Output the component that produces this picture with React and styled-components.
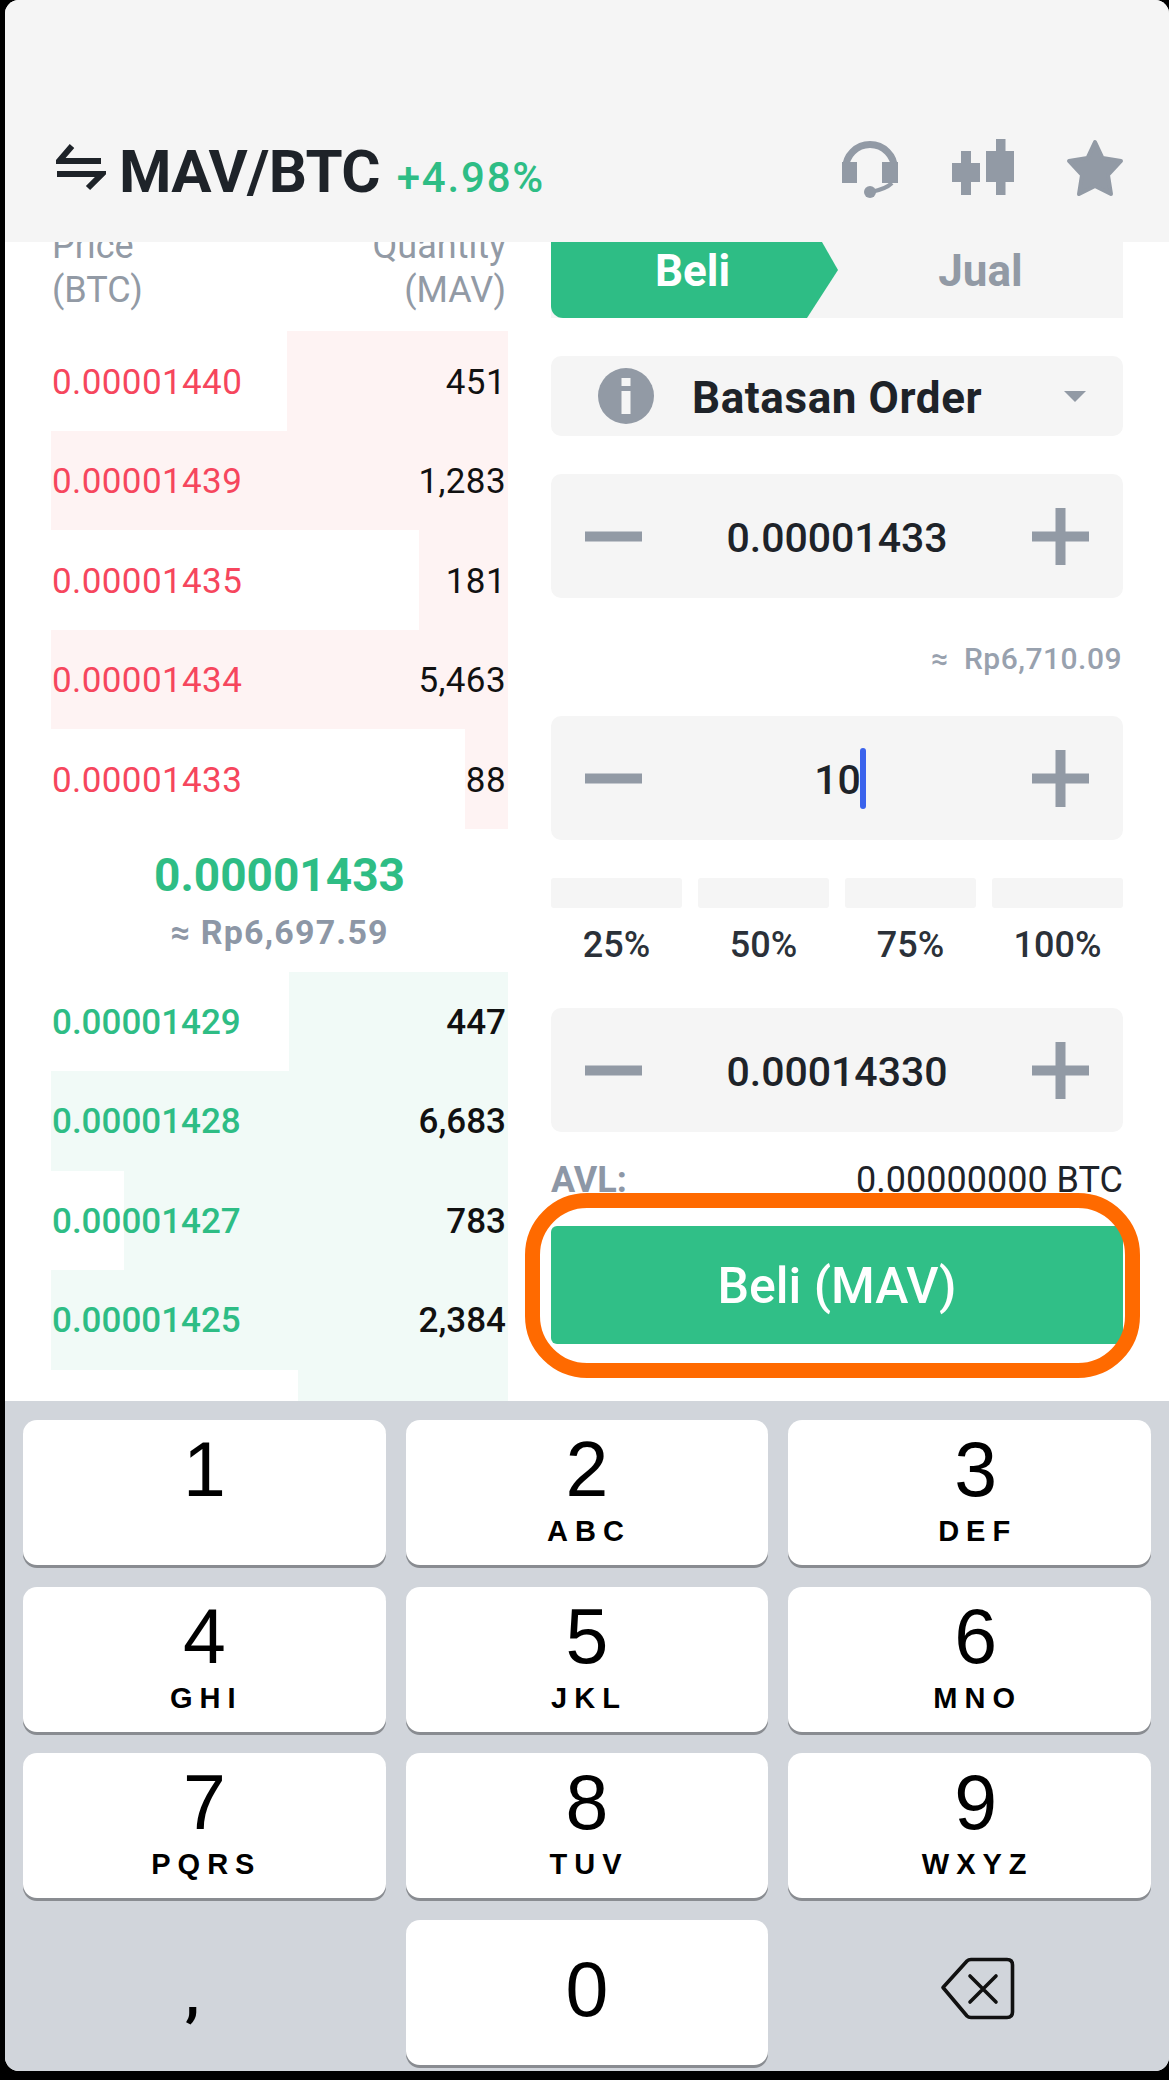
import React from 'react';
import styled, { createGlobalStyle } from 'styled-components';

const GREEN = '#2ebd85';
const RED = '#f6465d';
const GREY = '#929aa5';
const INK = '#1e2329';
const PANEL = '#f5f5f5';

const GlobalStyle = createGlobalStyle`
	html, body {
		margin: 0;
		padding: 0;
		background: #000;
	}
	* {
		box-sizing: border-box;
	}
`;

const Frame = styled.div`
	width: 1169px;
	height: 2080px;
	padding: 0 0 9px 5px;
	background: #000;
	font-family: Roboto, 'Liberation Sans', sans-serif;
`;

const Screen = styled.div`
	display: flex;
	flex-direction: column;
	height: 100%;
	background: #fff;
	border-radius: 14px;
	overflow: hidden;
`;

const Header = styled.header`
	position: relative;
	z-index: 2;
	display: flex;
	align-items: flex-start;
	justify-content: space-between;
	flex: 0 0 242px;
	padding: 142px 45px 0 51px;
	background: ${PANEL};
`;

const TitleWrap = styled.div`
	display: flex;
	align-items: baseline;
`;

const SwapIcon = styled.svg`
	align-self: flex-start;
	width: 50px;
	height: 50px;
	margin: 1px 13px 0 0;
`;

const Pair = styled.span`
	font-size: 60px;
	line-height: 60px;
	font-weight: 700;
	letter-spacing: -0.7px;
	color: ${INK};
`;

const Change = styled.span`
	margin-left: 17px;
	font-size: 42px;
	font-weight: 500;
	letter-spacing: 1.8px;
	color: ${GREEN};
`;

const Actions = styled.div`
	display: flex;
	align-items: flex-start;
	margin-top: -3px;
`;

const HeadsetIcon = styled.svg`
	width: 58px;
	height: 60px;
`;

const CandleIcon = styled.svg`
	width: 62px;
	height: 57px;
	margin-left: 53px;
`;

const StarIcon = styled.svg`
	width: 58px;
	height: 58px;
	margin-left: 52px;
`;

const Body = styled.main`
	display: grid;
	grid-template-columns: 457px 572px;
	column-gap: 43px;
	flex: 1;
	min-height: 0;
	padding-left: 46px;
	overflow: hidden;
`;

const Book = styled.section`
	min-width: 0;
`;

const BookHead = styled.div`
	display: flex;
	justify-content: space-between;
	margin: -18px 2px 19px 1px;
	font-size: 36px;
	line-height: 44px;
	color: ${GREY};
`;

const RightText = styled.div`
	text-align: right;
`;

const Row = styled.div`
	display: flex;
	align-items: center;
	justify-content: space-between;
	height: 99.5px;
	padding: ${p => (p.$buy ? '2px' : '3px')} 2px 0 1px;
	font-size: 35px;
	font-weight: ${p => (p.$buy ? 500 : 400)};
	letter-spacing: ${p => (p.$buy ? '0' : '0.4px')};
	background: linear-gradient(
		to left,
		${p => (p.$buy ? '#f1faf7' : '#fef3f3')} ${p => p.$depth}%,
		transparent ${p => p.$depth}%
	);
`;

const Price = styled.span`
	color: ${p => (p.$buy ? GREEN : RED)};
`;

const Qty = styled.span`
	color: #111;
`;

const Mid = styled.div`
	display: flex;
	flex-direction: column;
	align-items: center;
	height: 143px;
	padding-top: 18px;
`;

const MidPrice = styled.div`
	font-size: 46px;
	line-height: 56px;
	font-weight: 700;
	color: ${GREEN};
`;

const MidFiat = styled.div`
	margin-top: 9px;
	font-size: 34px;
	line-height: 40px;
	font-weight: 700;
	letter-spacing: 1.2px;
	color: #8d97a6;
`;

const Trade = styled.section`
	display: flex;
	flex-direction: column;
	min-width: 0;
`;

const Tabs = styled.div`
	display: flex;
	flex: 0 0 76px;
	background: ${PANEL};
`;

const BuyTab = styled.div`
	flex: 0 0 287px;
	padding: 4px 4px 0 0;
	font-size: 44px;
	line-height: 50px;
	font-weight: 700;
	text-align: center;
	color: #fff;
	background: ${GREEN};
	border-bottom-left-radius: 12px;
	clip-path: polygon(0 0, 271px 0, 287px 28px, 256px 76px, 0 76px);
`;

const SellTab = styled.div`
	flex: 1;
	padding-top: 4px;
	font-size: 44px;
	line-height: 50px;
	font-weight: 700;
	text-align: center;
	color: ${GREY};
`;

const Select = styled.div`
	display: flex;
	align-items: center;
	height: 80px;
	margin-top: 38px;
	padding: 0 37px 0 47px;
	background: ${PANEL};
	border-radius: 10px;
`;

const InfoIcon = styled.svg`
	flex: none;
	width: 56px;
	height: 56px;
`;

const SelectLabel = styled.span`
	flex: 1;
	margin-left: 38px;
	padding-top: 3px;
	font-size: 44px;
	font-weight: 700;
	letter-spacing: 0.6px;
	color: ${INK};
`;

const Caret = styled.svg`
	flex: none;
	width: 22px;
	height: 11px;
`;

const Stepper = styled.div`
	display: flex;
	align-items: center;
	justify-content: space-between;
	height: 124px;
	margin-top: ${p => p.$top || 0}px;
	padding: 0 34px;
	background: ${PANEL};
	border-radius: 10px;
`;

const StepIcon = styled.svg`
	flex: none;
	width: 57px;
	height: 57px;
`;

const StepValue = styled.div`
	display: inline-flex;
	align-items: center;
	padding-top: 4px;
	font-size: 41px;
	font-weight: 500;
	color: ${INK};
`;

const TextCaret = styled.span`
	width: 6px;
	height: 61px;
	margin: -4px -6px 0 -1px;
	background: #3b63ec;
	border-radius: 3px;
`;

const FiatHint = styled.div`
	display: flex;
	align-items: center;
	justify-content: flex-end;
	gap: 15px;
	height: 118px;
	padding: 2px 1px 0 0;
	font-size: 30px;
	font-weight: 500;
	letter-spacing: 0.5px;
	color: #98a1ae;
`;

const Percents = styled.div`
	display: grid;
	grid-template-columns: repeat(4, 1fr);
	column-gap: 16px;
	margin-top: 38px;
`;

const Percent = styled.div`
	text-align: center;
	font-size: 36px;
	line-height: 44px;
	font-weight: 500;
	color: #2b3139;
`;

const PercentBar = styled.div`
	height: 30px;
	margin-bottom: 15px;
	background: ${PANEL};
	border-radius: 3px;
`;

const Balance = styled.div`
	display: flex;
	align-items: center;
	justify-content: space-between;
	height: 94px;
	padding-top: 2px;
	font-size: 36px;
	color: ${INK};
`;

const BalanceLabel = styled.span`
	font-weight: 700;
	color: #8d97a6;
`;

const BuyWrap = styled.div`
	position: relative;
`;

const BuyButton = styled.div`
	display: flex;
	align-items: center;
	justify-content: center;
	height: 118px;
	padding-top: 2px;
	font-size: 50px;
	font-weight: 500;
	color: #fff;
	background: #30bf87;
	border-radius: 6px;
`;

const Ring = styled.div`
	position: absolute;
	top: -33px;
	right: -17px;
	bottom: -34px;
	left: -26px;
	border: 15px solid #ff6a00;
	border-radius: 62px;
	pointer-events: none;
`;

const Keyboard = styled.div`
	display: grid;
	grid-template-columns: repeat(3, 1fr);
	grid-auto-rows: 145px;
	gap: 21.5px 20px;
	flex: 0 0 670px;
	padding: 19px 18px 0;
	background: #d1d5db;
`;

const Key = styled.div`
	padding-top: ${p => (p.$center ? 31 : 11)}px;
	text-align: center;
	background: #fff;
	border-radius: 14px;
	box-shadow: 0 3px 0 #898c91;
	color: #000;
	font-family: 'Liberation Sans', Arial, sans-serif;

	&:nth-child(3n) {
		padding-left: 12px;
	}
`;

const Digit = styled.div`
	font-size: 77px;
	line-height: 76px;
`;

const Letters = styled.div`
	margin-top: 9px;
	font-size: 29px;
	line-height: 30px;
	font-weight: 700;
	letter-spacing: 7px;
	padding-left: 4px;
`;

const BlankKey = styled.div`
	display: flex;
	align-items: flex-start;
	justify-content: center;
	color: #000;
`;

const Comma = styled.span`
	margin: 44px 24px 0 0;
	font-family: Roboto, sans-serif;
	font-size: 60px;
	line-height: 60px;
	font-weight: 700;
`;

const BackspaceIcon = styled.svg`
	width: 75px;
	height: 65px;
	margin-top: 36px;
	margin-left: 15px;
`;

const asks = [
	{ price: '0.00001440', qty: '451', depth: 48.4 },
	{ price: '0.00001439', qty: '1,283', depth: 100 },
	{ price: '0.00001435', qty: '181', depth: 19.5 },
	{ price: '0.00001434', qty: '5,463', depth: 100 },
	{ price: '0.00001433', qty: '88', depth: 9.5 }
];

const bids = [
	{ price: '0.00001429', qty: '447', depth: 48 },
	{ price: '0.00001428', qty: '6,683', depth: 100 },
	{ price: '0.00001427', qty: '783', depth: 84 },
	{ price: '0.00001425', qty: '2,384', depth: 100 },
	{ price: '', qty: '', depth: 46 }
];

const keys = [
	['1', ''],
	['2', 'ABC'],
	['3', 'DEF'],
	['4', 'GHI'],
	['5', 'JKL'],
	['6', 'MNO'],
	['7', 'PQRS'],
	['8', 'TUV'],
	['9', 'WXYZ']
];

const Minus = () => (
	<StepIcon viewBox="0 0 57 57">
		<rect x="0" y="23.5" width="57" height="10" fill={GREY} />
	</StepIcon>
);

const Plus = () => (
	<StepIcon viewBox="0 0 57 57">
		<rect x="0" y="23.5" width="57" height="10" fill={GREY} />
		<rect x="23.5" y="0" width="10" height="57" fill={GREY} />
	</StepIcon>
);

const App = () => (
	<Frame>
		<GlobalStyle />
		<Screen>
			<Header>
				<TitleWrap>
					<SwapIcon viewBox="0 0 50 50">
						<path
							d="M16 3 L3 18 H45 M1 31 H46 L32 45"
							fill="none"
							stroke={INK}
							strokeWidth="6"
							strokeLinejoin="miter"
						/>
					</SwapIcon>
					<Pair>MAV/BTC</Pair>
					<Change>+4.98%</Change>
				</TitleWrap>
				<Actions>
					<HeadsetIcon viewBox="0 0 58 60">
						<path d="M4.5 30 a24.5 24.5 0 0 1 49 0" fill="none" stroke={GREY} strokeWidth="7" />
						<rect x="1" y="23" width="15" height="21" fill={GREY} />
						<rect x="41" y="23" width="16" height="21" fill={GREY} />
						<path d="M51 44 Q45 50 30 53" fill="none" stroke={GREY} strokeWidth="4" />
						<circle cx="29" cy="53" r="6" fill={GREY} />
					</HeadsetIcon>
					<CandleIcon viewBox="0 0 62 57">
						<rect x="9" y="12" width="10" height="44" fill={GREY} />
						<rect x="0" y="24" width="28" height="19" fill={GREY} />
						<rect x="44" y="0" width="9.5" height="56" fill={GREY} />
						<rect x="34" y="12" width="28" height="31" fill={GREY} />
					</CandleIcon>
					<StarIcon viewBox="0 0 58 58">
						<path
							d="M29 3 L36.5 19 L55 22 L42 36 L45 55 L29 47 L13 55 L16 36 L3 22 L21.5 19 Z"
							fill={GREY}
							stroke={GREY}
							strokeWidth="4"
							strokeLinejoin="round"
						/>
					</StarIcon>
				</Actions>
			</Header>

			<Body>
				<Book>
					<BookHead>
						<div>
							Price
							<br />
							(BTC)
						</div>
						<RightText>
							Quantity
							<br />
							(MAV)
						</RightText>
					</BookHead>
					{asks.map(row => (
						<Row key={row.price} $depth={row.depth}>
							<Price>{row.price}</Price>
							<Qty>{row.qty}</Qty>
						</Row>
					))}
					<Mid>
						<MidPrice>0.00001433</MidPrice>
						<MidFiat>≈ Rp6,697.59</MidFiat>
					</Mid>
					{bids.map((row, i) => (
						<Row key={i} $buy $depth={row.depth}>
							<Price $buy>{row.price}</Price>
							<Qty>{row.qty}</Qty>
						</Row>
					))}
				</Book>

				<Trade>
					<Tabs>
						<BuyTab>Beli</BuyTab>
						<SellTab>Jual</SellTab>
					</Tabs>
					<Select>
						<InfoIcon viewBox="0 0 56 56">
							<circle cx="28" cy="28" r="28" fill={GREY} />
							<rect x="23.5" y="10" width="9" height="8" fill={PANEL} />
							<rect x="23.5" y="23" width="9" height="23" fill={PANEL} />
						</InfoIcon>
						<SelectLabel>Batasan Order</SelectLabel>
						<Caret viewBox="0 0 22 11">
							<path d="M0 0 H22 L11 11 Z" fill={GREY} />
						</Caret>
					</Select>
					<Stepper $top={38}>
						<Minus />
						<StepValue>0.00001433</StepValue>
						<Plus />
					</Stepper>
					<FiatHint>
						<span>≈</span>
						<span>Rp6,710.09</span>
					</FiatHint>
					<Stepper>
						<Minus />
						<StepValue>
							10
							<TextCaret />
						</StepValue>
						<Plus />
					</Stepper>
					<Percents>
						{['25%', '50%', '75%', '100%'].map(p => (
							<Percent key={p}>
								<PercentBar />
								{p}
							</Percent>
						))}
					</Percents>
					<Stepper $top={41}>
						<Minus />
						<StepValue>0.00014330</StepValue>
						<Plus />
					</Stepper>
					<Balance>
						<BalanceLabel>AVL:</BalanceLabel>
						<span>0.00000000 BTC</span>
					</Balance>
					<BuyWrap>
						<BuyButton>Beli (MAV)</BuyButton>
						<Ring />
					</BuyWrap>
				</Trade>
			</Body>

			<Keyboard>
				{keys.map(([digit, letters]) => (
					<Key key={digit}>
						<Digit>{digit}</Digit>
						{letters && <Letters>{letters}</Letters>}
					</Key>
				))}
				<BlankKey>
					<Comma>,</Comma>
				</BlankKey>
				<Key $center>
					<Digit>0</Digit>
				</Key>
				<BlankKey>
					<BackspaceIcon viewBox="0 0 75 65">
						<path
							d="M3 31.5 L27 5 Q28.5 3.5 31 3.5 H67 Q72.5 3.5 72.5 9 V56 Q72.5 61.5 67 61.5 H31 Q28.5 61.5 27 60 Z"
							fill="none"
							stroke="#111"
							strokeWidth="3.6"
							strokeLinejoin="round"
						/>
						<path
							d="M30 20 L56 46 M56 20 L30 46"
							fill="none"
							stroke="#111"
							strokeWidth="3.6"
							strokeLinecap="round"
						/>
					</BackspaceIcon>
				</BlankKey>
			</Keyboard>
		</Screen>
	</Frame>
);

export default App;
